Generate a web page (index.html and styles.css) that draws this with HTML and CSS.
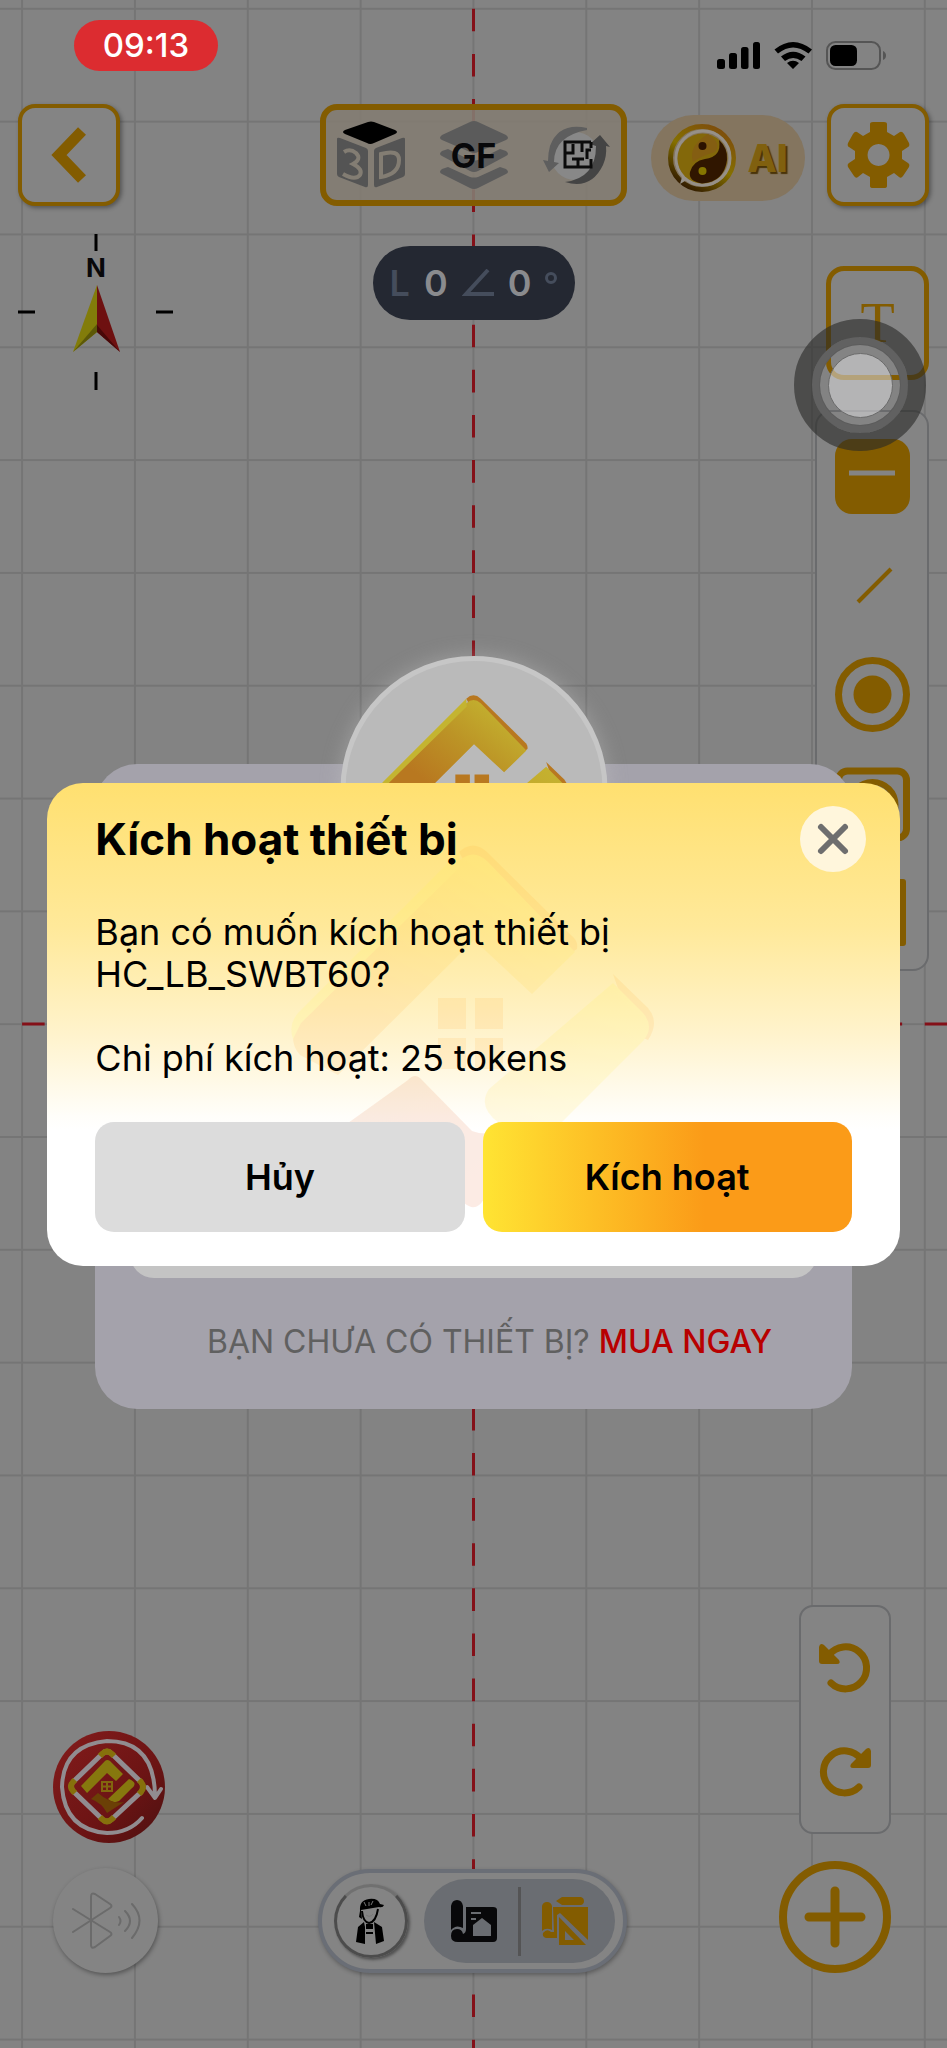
FILE: index.html
```html
<!DOCTYPE html>
<html lang="vi">
<head>
    <meta charset="UTF-8">
    <meta name="viewport" content="width=device-width, initial-scale=1.0">
    <title>Kích hoạt thiết bị</title>
    <link rel="stylesheet" href="styles.css">
</head>
<body>
    <!-- shared shapes -->
    <svg class="defs" width="0" height="0" aria-hidden="true">
        <defs>
            <linearGradient id="roofFill" x1="0" y1="1" x2="1" y2="0">
                <stop offset="0.3" stop-color="#b87820"/>
                <stop offset="0.6" stop-color="#bc9426"/>
                <stop offset="0.9" stop-color="#c4b430"/>
            </linearGradient>
            <linearGradient id="wingFill" x1="0" y1="1" x2="1" y2="0">
                <stop offset="0" stop-color="#c49a28"/>
                <stop offset="1" stop-color="#c4b430"/>
            </linearGradient>
            <linearGradient id="baseFill" x1="0" y1="0" x2="1" y2="1">
                <stop offset="0" stop-color="#9a4a20"/>
                <stop offset="1" stop-color="#a8441e"/>
            </linearGradient>
        </defs>
        <symbol id="logo" viewBox="0 0 370 370">
            <path fill="#b87820" d="M171 9q14-13 28 0l87 86q4 4 3 11l-12 8-92-80z"/>
            <path fill="url(#roofFill)" d="M171 18q14-13 28 0l88 91-43 42-58-54L50 232 12 212q-14-16 0-36z"/>
            <path fill="#c4b430" d="M171 9L10 170q-10 12-5 26l8-16L172 24z"/>
            <path fill="#b87820" d="M325 131l35 34q12 14 0 32l-14-6z"/>
            <path fill="url(#wingFill)" d="M325 140l30 30q12 14 0 28l-82 82h-62q-22-16-10-34z"/>
            <path fill="#b87820" d="M150 155h28v31h-28zM187 155h28v31h-28zM150 195h28v31h-28zM187 195h28v31h-28z"/>
            <path fill="url(#baseFill)" d="M120 237q7-8 14 0l50 51q16 6 34-2l-22 70q-8 14-20 4L60 280z"/>
        </symbol>
    </svg>

    <div class="screen">
        <svg class="canvas" viewBox="0 0 947 2048" preserveAspectRatio="xMidYMid slice" aria-hidden="true">
            <defs>
                <pattern id="cells" x="21.1" y="7.8" width="112.84" height="112.82" patternUnits="userSpaceOnUse">
                    <path d="M1 0v112.84M0 1h112.84" stroke="#757575" stroke-width="2"/>
                </pattern>
            </defs>
            <rect width="947" height="2048" fill="url(#cells)"/>
            <path class="axis" d="M473.5 8.8V2048"/>
            <path class="axis" d="M22.1 1024H947"/>
        </svg>

        <header class="status-bar">
            <time class="clock">09:13</time>
            <svg width="170" height="30" viewBox="0 0 170 30" aria-hidden="true">
                <rect x="1" y="18" width="8" height="10" rx="2.5"/>
                <rect x="13" y="12" width="8" height="16" rx="2.5"/>
                <rect x="25" y="6" width="7.5" height="22" rx="2.5"/>
                <rect x="37" y="1" width="7" height="27" rx="2.5"/>
                <path d="M58.500 8.500Q77 -6.500 96 8.500l-3.500 4Q77 .5 62 12.500zM65 15.500q12-9.500 24.500 0l-4 4.500q-8.500-6-16.500 0zM71 22q6-4.500 12 0l-6 6z"/>
                <rect x="111" y="1" width="53" height="27" rx="8.500" fill="none" stroke="#555" stroke-width="2"/>
                <rect x="114" y="4" width="27" height="21" rx="5.500"/>
                <path d="M167 10q3 1.500 3 4.500t-3 4.500z" fill="#555"/>
            </svg>
        </header>

        <nav class="top-bar">
            <button class="square-button" aria-label="Quay lại">
                <svg width="60" height="64" viewBox="0 0 60 64"><path d="M43 8L20 32l23 24" fill="none" stroke="#835c00" stroke-width="11"/></svg>
            </button>
            <div class="view-group">
                <button aria-label="3D">
                    <svg width="70" height="70" viewBox="0 0 70 70">
                        <path d="M7 12q0-1 2-2L32 2q3-1 6 0l21 8q4 2 0 4L38 23q-4 2-7 0L9 14q-2-1-2-2z" fill="#000"/>
                        <path d="M1 19q0-2 3-1l26 10q2 1 2 3v34q0 3-3 2L3 57q-2-1-2-3zM69 19q0-2-3-1L40 28q-2 1-2 3v34q0 3 3 2l26-10q2-1 2-3z" fill="#545454"/>
                        <path d="M8 32q6-4 12 1 6 6-3 11 10 5 7 11-5 6-17-1" fill="none" stroke="#837d73" stroke-width="4"/>
                        <path d="M45 34v23q18-3 18-17 0-11-18-6z" fill="none" stroke="#837d73" stroke-width="4"/>
                    </svg>
                </button>
                <button class="floor">
                    <svg width="70" height="70" viewBox="0 0 70 70" fill="#5b5b5b">
                        <path d="M3 15L31 2q4-2 8 0l28 13q4 3 0 5L39 32q-4 2-8 0L3 20q-4-2 0-5z"/>
                        <path d="M3 31l6-2 22 11q4 1 8 0l22-11 6 2q4 3 0 5L39 51q-4 2-8 0L3 36q-4-2 0-5z"/>
                        <path d="M3 49l6-2 22 10q4 1 8 0l22-10 6 2q4 3 0 5L39 68q-4 2-8 0L3 54q-4-2 0-5z"/>
                    </svg>
                    <span>GF</span>
                </button>
                <button aria-label="Xoay mặt bằng">
                    <svg width="70" height="70" viewBox="0 0 70 70">
                        <circle cx="34" cy="36" r="24" fill="#888"/>
                        <path d="M46 8Q18 2 9 26q-2 7-2 15l-5-1 6 12 10-9-5-1Q13 16 46 10z" fill="#5e5e5e"/>
                        <path d="M24 62q26 8 38-17 4-9 3-19l4 1-10-12-10 9 6 2q0 32-31 36z" fill="#444"/>
                        <path d="M50 22H24v25h26v-8M50 22v6M24 33h8v-9M41 22v10M31 39h12M37 39v7M50 30h-4v9" fill="none" stroke="#0b0b0b" stroke-width="3"/>
                    </svg>
                </button>
            </div>
            <div class="top-right">
                <button class="ai-button">
                    <svg width="69" height="69" viewBox="0 0 69 69" aria-hidden="true">
                        <defs><linearGradient id="gold" x1="0.800" y1="0" x2="0.200" y2="1">
                            <stop offset="0" stop-color="#7e4c0c"/><stop offset="0.5" stop-color="#857000"/><stop offset="1" stop-color="#2c1500"/>
                        </linearGradient></defs>
                        <circle cx="34" cy="34" r="31.500" fill="none" stroke="url(#gold)" stroke-width="5"/>
                        <circle cx="35" cy="34" r="27" fill="none" stroke="#969088" stroke-width="3"/>
                        <path d="M12 60l10-6-7-4z" fill="#969088"/>
                        <circle cx="34.500" cy="34.500" r="25" fill="#83680a"/>
                        <path d="M40 10q14 9 7 18-14 4-22 10Q20 22 40 10z" fill="#845e12"/>
                        <path d="M51 16Q60 24 59 36 56 58 34 59.500 20 57 22 48q3-11 15-13 17-2 14-19z" fill="#301600"/>
                        <circle cx="34.500" cy="22" r="4" fill="#2c1200"/>
                        <circle cx="34.500" cy="47" r="4" fill="#857600"/>
                    </svg>
                    <span>AI</span>
                </button>
                <button class="square-button" aria-label="Cài đặt">
                    <svg width="66" height="68" viewBox="0 0 66 68">
                        <path fill="#835c00" fill-rule="evenodd" d="M25 3q0-2 3-2h11q3 0 3 2v8l7 4 6-4q2-1 4 2l5 9q1 3-1 4l-6 4v8l6 4q2 1 1 4l-6 9q-2 3-4 1l-5-4-7 4v9q0 2-3 2H28q-3 0-3-2v-9l-7-4-5 4q-2 2-4-1l-6-9q-1-3 1-4l6-4v-8l-6-4q-2-1-1-4l5-9q2-3 4-2l6 4 7-4zM33.500 23a11 11 0 1 0 .1 0z"/>
                    </svg>
                </button>
            </div>
        </nav>

        <main class="workspace">
            <svg class="compass" width="156" height="156" viewBox="0 0 156 156" role="img" aria-label="La bàn">
                <path d="M78 0v17M78 138v18M0 78h17M138 78h17" stroke="#000" stroke-width="3"/>
                <text x="78" y="43" text-anchor="middle">N</text>
                <path d="M79 51L55 118l24-20z" fill="#827c0a"/>
                <path d="M55 118l24-28v8z" fill="#5c5808"/>
                <path d="M79 51l23 67-23-20z" fill="#6e1010"/>
                <path d="M102 118L79 91v7z" fill="#480808"/>
            </svg>
            <div class="measure">
                <span class="unit">L</span>
                <span>0</span>
                <svg width="32" height="28" viewBox="0 0 32 28" aria-hidden="true"><path d="M26 1L4 25h28" fill="none" stroke="#454d5c" stroke-width="4"/></svg>
                <span>0</span>
                <svg class="degree" width="12" height="12" viewBox="0 0 12 12" aria-hidden="true"><circle cx="6" cy="6" r="4.500" fill="none" stroke="#454d5c" stroke-width="3"/></svg>
            </div>
            <aside class="side-tools">
                <button class="text-tool">T</button>
                <div class="draw-tools">
                    <button aria-label="Tường"><svg viewBox="0 0 75 75"><rect width="75" height="75" rx="17" fill="#835c00"/><path d="M14 34h46" stroke="#848484" stroke-width="5"/></svg></button>
                    <button aria-label="Đường thẳng"><svg viewBox="0 0 75 75"><path d="M23 54l33-33" stroke="#835c00" stroke-width="4"/></svg></button>
                    <button aria-label="Hình tròn"><svg viewBox="0 0 75 75"><circle cx="37.500" cy="37.500" r="34" fill="none" stroke="#835c00" stroke-width="7"/><circle cx="37.500" cy="37.500" r="19" fill="#835c00"/></svg></button>
                    <button aria-label="Khung"><svg viewBox="0 0 75 75"><rect x="3.500" y="5" width="68" height="67" rx="9" fill="none" stroke="#835c00" stroke-width="7"/><circle cx="37.500" cy="39" r="23" fill="none" stroke="#835c00" stroke-width="6"/></svg></button>
                    <button aria-label="Cửa"><svg viewBox="0 0 75 75"><rect x="4" y="4" width="67" height="67" rx="3" fill="#835c00"/></svg></button>
                </div>
            </aside>
        </main>

        <footer class="bottom-bar">
            <div class="bottom-left">
                <button aria-label="Kết nối la bàn">
                    <svg width="112" height="112" viewBox="0 0 112 112">
                        <defs><linearGradient id="redDisc" x1="0" y1="0" x2="1" y2="1"><stop offset="0" stop-color="#841c1c"/><stop offset="0.600" stop-color="#6c1414"/><stop offset="1" stop-color="#4c1010"/></linearGradient></defs>
                        <circle cx="56" cy="56" r="56" fill="url(#redDisc)"/>
                        <path d="M102 66Q102 10 54 10 10 14 9 56q3 43 45 46 22 0 35-15M94 56l8 11 6-9" fill="none" stroke="#918c90" stroke-width="4" stroke-linecap="round" stroke-linejoin="round"/>
                        <path d="M49 23q5-5 10 0l29 28q4 5 0 10L59 88q-5 5-10 0L20 60q-4-5 0-9z" fill="none" stroke="#918c90" stroke-width="5"/>
                        <path d="M47 25l2-2q5-5 10 0l2 2M86 49l2 2q4 5 0 10l-2 2M61 86l-2 2q-5 5-10 0l-2-2M22 49l-2 2q-4 4 0 9l2 2" fill="none" stroke="#86700c" stroke-width="6"/>
                        <path d="M52 30q2-2 5 0l13 13-7 7-9-8-20 20-6-7z" fill="#86780e"/>
                        <path d="M76 48q10 4 2 10L66 70q-6 3-11-2z" fill="#86780e"/>
                        <path d="M38 68l7-6q14 12 26 9L54 82q-5-10-16-14z" fill="#6b4006"/>
                        <path d="M49 51h10v9H49zM54 51v9M49 55.500h10" fill="none" stroke="#82660e" stroke-width="2"/>
                    </svg>
                </button>
                <button class="bluetooth" aria-label="Bluetooth">
                    <svg width="74" height="60" viewBox="0 0 74 60" fill="none" stroke="#6b6b6b" stroke-width="2" stroke-linejoin="round" stroke-linecap="round">
                        <path d="M4 18l37 23q3 2 0 4L26 56q-4 2-4-2V6q0-5 4-3l15 10q3 2 0 4L4 41M50 26q3 4 0 8M56 20q10 10 0 20M63 13q15 16 0 34"/>
                    </svg>
                </button>
            </div>

            <div class="mode-switch">
                <button class="avatar" aria-label="Kỹ sư">
                    <svg width="32" height="46" viewBox="0 0 32 46">
                        <path d="M5 13Q4 2 14 1q9-1 11 5l4 1q-1 3-5 2L6 12l1 9-3-2z" fill="#000"/>
                        <path d="M7 13q1 11 7 12 7-1 9-14" fill="none" stroke="#000" stroke-width="2"/>
                        <path d="M11 17q4 3 7-1M9 4l2 4M14 4v4M18 3l-2 4" stroke="#777" stroke-width="1" fill="none"/>
                        <path d="M9 24l-6 5L1 44l9 2V29zM19 24l8 5 2 14-8 3zM11 26h7v5h-7zM11 34h7v2h-7z" fill="#000"/>
                    </svg>
                </button>
                <div class="mode-pair">
                    <button aria-label="Bản vẽ">
                        <svg width="48" height="46" viewBox="0 0 48 46" fill="#08080a">
                            <path d="M1 8q1-6 6-6t6 6v22q-7-4-12 2zM16 9h27q4 0 4 3v28q0 4-4 4H8q-7 0-7-6 0-7 6-7 5 0 6 5 3-1 3-5z"/>
                            <path d="M21 15h10M21 21h5" stroke="#6a6d72" stroke-width="2"/>
                            <path d="M23 27l9-7 9 7v11H23z" fill="#6a6d72"/>
                        </svg>
                    </button>
                    <i></i>
                    <button aria-label="Thiết kế">
                        <svg width="48" height="50" viewBox="0 0 48 50" fill="#835c00">
                            <path d="M15 5l6-4h19q3 1 3 4t-3 4H21zM1 10q1-4 5-4t5 4v24q-6-3-10 1zM12 11h35v33L19 17l-3 2v23H5q-4-1-3-5 4-5 8-1h3z"/>
                            <path fill-rule="evenodd" d="M18 21l27 28H18zM24 35v9h9z"/>
                        </svg>
                    </button>
                </div>
            </div>

            <div class="bottom-right">
                <div class="history">
                    <button aria-label="Hoàn tác">
                        <svg width="54" height="54" viewBox="0 0 54 54"><path d="M11 14A21 21 0 1 1 13 42" fill="none" stroke="#835c00" stroke-width="7" stroke-linecap="round"/><path d="M1 6q1-5 5-2l15 15q2 4-2 4H4q-3 0-3-3z" fill="#835c00"/></svg>
                    </button>
                    <button aria-label="Làm lại">
                        <svg width="54" height="54" viewBox="0 0 54 54"><path d="M43 14A21 21 0 1 0 41 42" fill="none" stroke="#835c00" stroke-width="7" stroke-linecap="round"/><path d="M53 6q-1-5-5-2L33 19q-2 4 2 4h15q3 0 3-3z" fill="#835c00"/></svg>
                    </button>
                </div>
                <button class="add-button" aria-label="Thêm">
                    <svg width="62" height="62" viewBox="0 0 62 62"><path d="M31 5v52M5 31h52" stroke="#835c00" stroke-width="9" stroke-linecap="round"/></svg>
                </button>
            </div>
        </footer>

        <div class="layer license-layer">
            <section class="license">
                <div class="badge"><svg width="192" height="192" aria-hidden="true"><use href="#logo"/></svg></div>
                <div class="license-box"></div>
                <p>BẠN CHƯA CÓ THIẾT BỊ? <a href="#">MUA NGAY</a></p>
            </section>
        </div>

        <div class="touch"><span></span></div>

        <div class="layer">
            <section class="dialog" role="dialog" aria-labelledby="dialogTitle">
                <svg class="watermark" width="370" height="370" aria-hidden="true"><use href="#logo"/></svg>
                <div class="dialog-head">
                    <h2 id="dialogTitle">Kích hoạt thiết bị</h2>
                    <button class="close" aria-label="Đóng">
                        <svg width="34" height="34" viewBox="0 0 34 34"><path d="M5 5l24 24M29 5L5 29" stroke="#6e6e6e" stroke-width="6" stroke-linecap="round"/></svg>
                    </button>
                </div>
                <div class="dialog-text">Bạn có muốn kích hoạt thiết bị<br>HC_LB_SWBT60?<br><br>Chi phí kích hoạt: 25 tokens</div>
                <div class="dialog-actions">
                    <button class="cancel">Hủy</button>
                    <button class="confirm">Kích hoạt</button>
                </div>
            </section>
        </div>
    </div>
</body>
</html>
```

FILE: styles.css
```css
* {
    box-sizing: border-box;
}

body {
    margin: 0;
    background: #838383;
    font-family: Inter, "Noto Sans", sans-serif;
    color: #000;
}

button {
    display: flex;
    align-items: center;
    justify-content: center;
    padding: 0;
    border: none;
    background: none;
    font: inherit;
    color: inherit;
    cursor: pointer;
}

svg {
    display: block;
    flex: none;
}

.defs {
    position: absolute;
}

.screen {
    position: relative;
    display: flex;
    flex-direction: column;
    min-height: 100vh;
    overflow: hidden;
}

/* Drawing grid behind everything */
.canvas {
    position: absolute;
    inset: 0;
    width: 100%;
    height: 100%;
}

.axis {
    stroke: #841018;
    stroke-width: 3;
    stroke-dasharray: 22.56 22.57;
}

.status-bar,
.top-bar,
.workspace,
.bottom-bar {
    position: relative;
}

.status-bar {
    display: flex;
    align-items: flex-end;
    justify-content: space-between;
    padding: 20px 61px 0 74px;
}

.clock {
    width: 144px;
    border-radius: 26px;
    background: #dc2c30;
    color: #fff;
    font-size: 33px;
    font-weight: 500;
    line-height: 51px;
    text-align: center;
}

/* Top buttons */
.top-bar {
    display: grid;
    grid-template-columns: 1fr auto 1fr;
    align-items: center;
    padding: 33px 18px 0;
}

.square-button {
    width: 102px;
    height: 102px;
    border: 4px solid #835c00;
    border-radius: 17px;
    background: #848484;
    box-shadow: 2px 2px 4px rgba(0, 0, 0, 0.35);
}

.view-group {
    display: flex;
    justify-content: space-between;
    width: 307px;
    height: 102px;
    padding: 0 10px;
    border: 6px solid #835c00;
    border-radius: 17px;
    background: rgba(131, 124, 114, 0.9);
}

.floor {
    position: relative;
}

.floor span {
    position: absolute;
    color: #08080a;
    font-size: 34px;
    font-weight: 700;
}

.top-right {
    display: flex;
    align-items: center;
    justify-content: flex-end;
    gap: 22px;
}

.ai-button {
    gap: 10px;
    width: 154px;
    height: 86px;
    margin-top: 6px;
    border-radius: 43px;
    background: #84755f;
    color: #80600f;
    font-size: 38px;
    font-weight: 800;
    text-shadow: 2px 2px 1px #4a3408;
}

/* Compass, measure and side tools */
.workspace {
    display: grid;
    grid-template-columns: 1fr auto 1fr;
    align-items: start;
    padding: 28px 18px 0;
}

.compass text {
    fill: #08080a;
    font-size: 26px;
    font-weight: 700;
}

.measure {
    display: flex;
    align-items: center;
    justify-content: center;
    gap: 14px;
    width: 202px;
    height: 74px;
    margin-top: 12px;
    border-radius: 37px;
    background: #242832;
    color: #8a8b8e;
    font-size: 36px;
    font-weight: 600;
}

.measure .unit {
    color: #454d5c;
}

.degree {
    margin-bottom: 10px;
}

.side-tools {
    display: flex;
    flex-direction: column;
    align-items: flex-end;
    gap: 30px;
    padding-top: 32px;
}

.text-tool {
    width: 103px;
    height: 114px;
    border: 5px solid #835c00;
    border-radius: 18px;
    background: #848484;
    color: #835c00;
    font-family: "Liberation Serif", serif;
    font-size: 56px;
}

.draw-tools {
    display: flex;
    flex-direction: column;
    align-items: center;
    gap: 34px;
    width: 114px;
    padding: 27px 0 19px;
    border: 2px solid #6a6b6d;
    border-radius: 16px;
    background: #848484;
}

.draw-tools svg {
    width: 75px;
    height: 75px;
}

/* Bottom controls */
.bottom-bar {
    display: grid;
    grid-template-columns: 1fr auto 1fr;
    align-items: end;
    margin-top: auto;
    padding: 0 56px 75px 53px;
}

.bottom-left {
    display: flex;
    flex-direction: column;
    gap: 25px;
}

.bottom-left button {
    align-self: flex-start;
}

.bluetooth {
    width: 105px;
    height: 105px;
    border-radius: 50%;
    background: #848484;
    box-shadow: 1px 2px 4px rgba(0, 0, 0, 0.35);
}

.mode-switch {
    display: flex;
    align-items: center;
    gap: 16px;
    width: 309px;
    height: 104px;
    padding: 0 8px 0 12px;
    border: 4px solid #6a6e76;
    border-radius: 52px;
    background: #848484;
    box-shadow: 1px 2px 4px rgba(0, 0, 0, 0.3);
}

.avatar {
    width: 74px;
    height: 74px;
    border: 3px solid #4c4c4c;
    border-top-color: #707070;
    border-radius: 50%;
    box-shadow: 2px 2px 3px rgba(0, 0, 0, 0.4);
}

.mode-pair {
    display: flex;
    flex: 1;
    align-items: center;
    justify-content: center;
    gap: 20px;
    height: 84px;
    border-radius: 42px;
    background: #6a6d72;
}

.mode-pair i {
    width: 3px;
    height: 69px;
    background: #545455;
}

.bottom-right {
    display: flex;
    flex-direction: column;
    align-items: flex-end;
    gap: 27px;
}

.history {
    display: flex;
    flex-direction: column;
    align-items: center;
    justify-content: center;
    gap: 50px;
    width: 92px;
    height: 229px;
    border: 2px solid #6a6b6d;
    border-radius: 14px;
    background: #848484;
}

.add-button {
    width: 112px;
    height: 112px;
    border: 8px solid #835c00;
    border-radius: 50%;
    background: #848484;
}

/* License card under the dialog */
.layer {
    position: absolute;
    inset: 0;
    display: flex;
    align-items: center;
    justify-content: center;
}

.license-layer {
    padding-top: 124px;
}

.license {
    position: relative;
    width: 80%;
    padding: 150px 35px 42px;
    border-radius: 42px;
    background: #a4a2ab;
}

.badge {
    position: absolute;
    top: -108px;
    left: 50%;
    width: 267px;
    height: 267px;
    padding-top: 33px;
    border: 5px solid #c6c6c6;
    border-radius: 50%;
    background: #bababa;
    box-shadow: 0 0 20px rgba(200, 200, 200, 0.4);
    transform: translateX(-50%);
}

.badge svg {
    margin: 0 auto;
}

.license-box {
    height: 364px;
    border-radius: 24px;
    background: #c4c4c4;
}

.license p {
    margin: 39px 0 0;
    padding-left: 32px;
    color: #606060;
    font-size: 32px;
    line-height: 50px;
    text-align: center;
}

.license a {
    color: #b80000;
    font-weight: 500;
    text-decoration: none;
}

/* Touch pointer */
.touch {
    position: absolute;
    top: 319px;
    right: 21px;
    display: flex;
    align-items: center;
    justify-content: center;
    width: 132px;
    height: 132px;
    border: 18px solid rgba(40, 40, 38, 0.6);
    border-radius: 50%;
    box-shadow: inset 0 0 0 7px rgba(100, 100, 100, 0.7), inset 0 0 0 8px #5c5c5c;
}

.touch span {
    width: 65px;
    height: 65px;
    border: 1px solid #6b6b6b;
    border-radius: 50%;
    background: rgba(220, 220, 222, 0.55);
}

/* Activation dialog */
.dialog {
    position: relative;
    width: 90%;
    padding: 23px 48px 34px;
    border-radius: 36px;
    background: linear-gradient(#ffe070, #ffe99a 30%, #fff3cc 52%, #fffefa 69%, #fff 72%);
}

.watermark {
    position: absolute;
    top: 60px;
    left: 50%;
    opacity: 0.12;
    filter: brightness(1.4);
    transform: translateX(-50%);
}

.dialog-head,
.dialog-text,
.dialog-actions {
    position: relative;
}

.dialog-head {
    display: flex;
    align-items: center;
    justify-content: space-between;
    margin-right: -14px;
}

.dialog h2 {
    margin: 0;
    font-size: 44px;
    font-weight: 700;
}

.close {
    width: 66px;
    height: 66px;
    border-radius: 50%;
    background: #fff6dc;
}

.dialog-text {
    margin-top: 39px;
    font-size: 36px;
    line-height: 42px;
}

.dialog-actions {
    display: flex;
    gap: 18px;
    margin-top: 43px;
}

.dialog-actions button {
    flex: 1;
    height: 110px;
    border-radius: 19px;
    font-size: 36px;
    font-weight: 600;
}

.cancel {
    background: #dcdcdc;
}

.confirm {
    background: linear-gradient(90deg, #ffe433, #fb9b18 60%);
}
```
